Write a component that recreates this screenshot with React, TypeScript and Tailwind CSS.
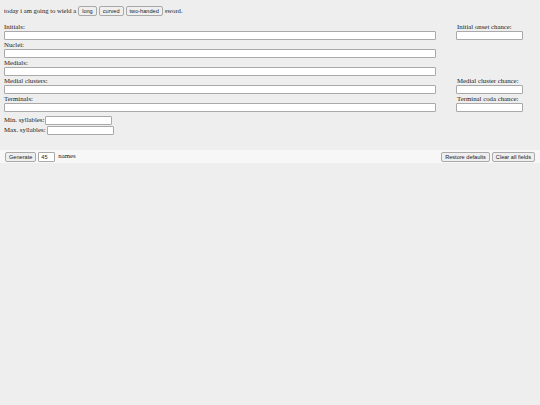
import React from "react";

const inputCls = "block h-[9px] bg-white border border-[#a9a9a9] rounded-[1px] box-border";
const btnCls = "h-[10px] px-[3px] bg-[#efefef] border border-[#a9a9a9] rounded-[2px] text-[5.6px] leading-[8px] text-[#222] box-border";
const sans = { fontFamily: '"Liberation Sans", Arial, sans-serif' };

function Field({ label, chance }: { label: string; chance?: string }) {
  return (
    <>
      <div>
        <div className="h-[8px] leading-[8px]">{label}</div>
        <div className={inputCls + " w-[432px] mb-[1px]"} />
      </div>
      <div>
        {chance ? (
          <>
            <div className="h-[8px] leading-[8px] pl-[1px]">{chance}</div>
            <div className={inputCls + " w-[67px] mb-[1px]"} />
          </>
        ) : null}
      </div>
    </>
  );
}

export default function App() {
  return (
    <div
      className="w-full min-h-[405px] bg-[#eeeeee] text-[6.8px] text-[#222]"
      style={{ fontFamily: '"Liberation Serif", "Times New Roman", serif' }}
    >
      <div className="flex items-center gap-[2px] pl-[4px] pt-[6px] h-[10px] box-content text-[6.6px]">
        <span>today i am going to wield a</span>
        <button className={btnCls} style={sans}>long</button>
        <button className={btnCls} style={sans}>curved</button>
        <button className={btnCls} style={sans}>two-handed</button>
        <span>sword.</span>
      </div>
      <div className="grid grid-cols-[432px_67px] gap-x-[20px] pl-[4px] pt-[7px]">
        <Field label="Initials:" chance="Initial onset chance:" />
        <Field label="Nuclei:" />
        <Field label="Medials:" />
        <Field label="Medial clusters:" chance="Medial cluster chance:" />
        <Field label="Terminals:" chance="Terminal coda chance:" />
      </div>
      <div className="pl-[4px] pt-[2px]">
        <div className="flex items-center h-[10px] gap-[1px]">
          <span>Min. syllables:</span>
          <div className={inputCls + " w-[67px]"} />
        </div>
        <div className="flex items-center h-[10px] gap-[1px]">
          <span>Max. syllables:</span>
          <div className={inputCls + " w-[67px]"} />
        </div>
      </div>
      <div className="mt-[15px] h-[13px] bg-[#f7f7f7] flex items-center justify-between pl-[5px] pr-[5px]">
        <div className="flex items-center gap-[2px]">
          <button className={btnCls} style={sans}>Generate</button>
          <div className={inputCls + " w-[17px] h-[10px] text-[5.6px] leading-[8px] pl-[2px]"} style={sans}>45</div>
          <span className="ml-[1px]">names</span>
        </div>
        <div className="flex items-center gap-[2px]">
          <button className={btnCls + " px-[2.5px]"} style={sans}>Restore defaults</button>
          <button className={btnCls} style={sans}>Clear all fields</button>
        </div>
      </div>
    </div>
  );
}
